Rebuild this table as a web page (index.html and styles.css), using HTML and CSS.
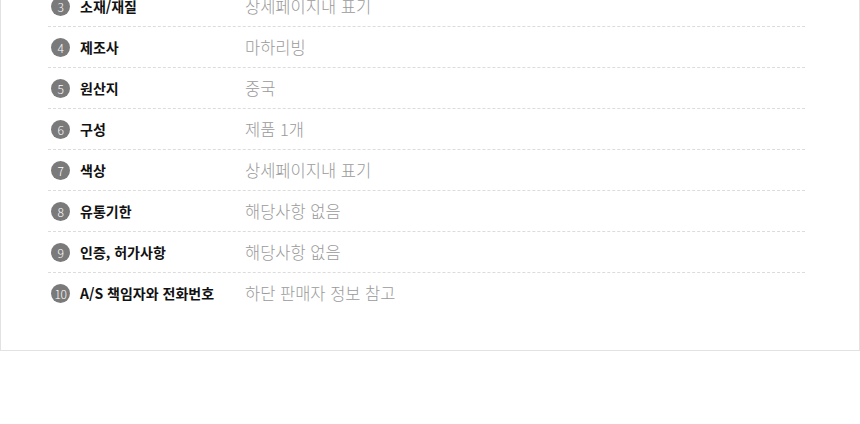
FILE: index.html
```html
<!DOCTYPE html>
<html lang="ko">
<head>
  <meta charset="UTF-8" />
  <meta name="viewport" content="width=device-width, initial-scale=1.0"/>
  <title>상품정보 제공고시</title>
  <link rel="stylesheet" href="styles.css">
</head>
<body>

<div class="info-box">
  <ul class="info-list">
    <li class="info-row">
      <span class="num">3</span>
      <span class="label">소재/재질</span>
      <span class="value">상세페이지내 표기</span>
    </li>
    <li class="info-row">
      <span class="num">4</span>
      <span class="label">제조사</span>
      <span class="value">마하리빙</span>
    </li>
    <li class="info-row">
      <span class="num">5</span>
      <span class="label">원산지</span>
      <span class="value">중국</span>
    </li>
    <li class="info-row">
      <span class="num">6</span>
      <span class="label">구성</span>
      <span class="value">제품 1개</span>
    </li>
    <li class="info-row">
      <span class="num">7</span>
      <span class="label">색상</span>
      <span class="value">상세페이지내 표기</span>
    </li>
    <li class="info-row">
      <span class="num">8</span>
      <span class="label">유통기한</span>
      <span class="value">해당사항 없음</span>
    </li>
    <li class="info-row">
      <span class="num">9</span>
      <span class="label">인증, 허가사항</span>
      <span class="value">해당사항 없음</span>
    </li>
    <li class="info-row">
      <span class="num">10</span>
      <span class="label">A/S 책임자와 전화번호</span>
      <span class="value">하단 판매자 정보 참고</span>
    </li>
  </ul>
</div>

</body>
</html>
```

FILE: styles.css
```css
body {
  margin: 0;
  font-family: "Noto Sans CJK KR", "Noto Sans", sans-serif;
  background-color: #fff;
  color: #111;
}

.info-box {
  margin-top: -14px;
  border: 1px solid #e2e2e2;
  border-top: none;
  padding: 0 0 37px 47px;
}

.info-list {
  list-style: none;
  margin: 0;
  padding: 0;
  width: 757px;
}

.info-row {
  display: flex;
  align-items: center;
  height: 40px;
  border-bottom: 1px dashed #dcdcdc;
}

.info-row:last-child {
  border-bottom: none;
}

.num {
  width: 19px;
  height: 19px;
  margin-left: 3px;
  margin-right: 10px;
  border-radius: 50%;
  background-color: #7a7a7a;
  color: #fff;
  font-size: 12px;
  font-weight: 300;
  line-height: 19px;
  text-align: center;
  letter-spacing: -0.5px;
}

.label {
  width: 165px;
  font-size: 14px;
  font-weight: bold;
  color: #111;
}

.value {
  font-size: 16.5px;
  font-weight: 300;
  color: #9a9a9a;
}
```
